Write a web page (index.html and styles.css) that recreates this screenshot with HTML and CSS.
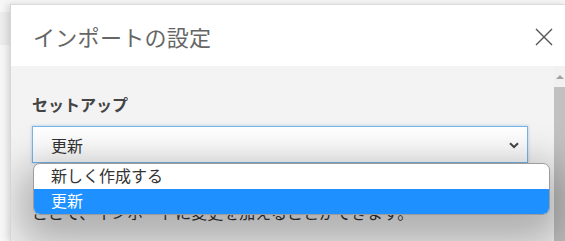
FILE: index.html
```html
<!DOCTYPE html>
<html lang="ja">
<head>
    <meta charset="UTF-8">
    <meta name="viewport" content="width=device-width, initial-scale=1.0">
    <title>インポートの設定</title>
    <link rel="stylesheet" href="styles.css">
</head>
<body>
    <div class="backdrop">
        <div class="band"></div>
    </div>
    <div class="dialog">
        <div class="header">
            <h1 class="title">インポートの設定</h1>
            <button class="close" aria-label="閉じる">
                <svg width="18" height="18" viewBox="0 0 18 18">
                    <path d="M1 1 L17 17 M17 1 L1 17" stroke="#555" stroke-width="1.4" fill="none"/>
                </svg>
            </button>
        </div>
        <div class="body">
            <div class="content">
                <label class="label">セットアップ</label>
                <div class="field">
                    <div class="select">
                        <span>更新</span>
                        <svg class="chevron" width="10" height="7" viewBox="0 0 10 7">
                            <path d="M1 1.2 L5 5 L9 1.2" stroke="#444" stroke-width="2" fill="none"/>
                        </svg>
                    </div>
                    <ul class="options">
                        <li class="option">新しく作成する</li>
                        <li class="option selected">更新</li>
                    </ul>
                </div>
                <p class="hint">ここで、インポートに変更を加えることができます。</p>
            </div>
            <div class="scrollbar">
                <div class="arrow"></div>
                <div class="thumb"></div>
            </div>
        </div>
    </div>
</body>
</html>
```

FILE: styles.css
```css
body {
    margin: 0;
    width: 565px;
    height: 241px;
    overflow: hidden;
    background-color: #f6f6f6;
    font-family: "Noto Sans CJK JP", "Noto Sans", sans-serif;
    position: relative;
}

.backdrop {
    position: absolute;
    inset: 0;
    padding-top: 12px;
}

.band {
    height: 33px;
    background-color: #ececec;
}

.dialog {
    position: relative;
    margin: 4px 0 0 10px;
    width: 555px;
    height: 236px;
    overflow: hidden;
    background-color: #f3f3f3;
    border-top: 1px solid #dcdcdc;
    border-left: 1px solid #d6d6d6;
    box-shadow: -3px 0 6px rgba(0, 0, 0, 0.12);
    display: flex;
    flex-direction: column;
}

.header {
    height: 61px;
    background-color: white;
    display: flex;
    align-items: center;
    justify-content: space-between;
    padding: 0 13px 0 22px;
    flex-shrink: 0;
}

.title {
    margin: 0;
    font-size: 22px;
    font-weight: normal;
    color: #666;
    letter-spacing: 0.3px;
}

.close {
    background: none;
    border: none;
    padding: 0;
    width: 18px;
    height: 18px;
    margin-top: 2px;
    cursor: pointer;
}

.body {
    flex: 1;
    display: flex;
}

.content {
    flex: 1;
    padding: 26px 0 0 21px;
}

.label {
    display: block;
    font-size: 16px;
    font-weight: bold;
    color: #444;
    line-height: 24px;
}

.field {
    position: relative;
    width: 496px;
    margin-top: 10px;
}

.select {
    height: 35px;
    background: linear-gradient(#fff, #fafafa);
    border: 1px solid #78b5e6;
    box-shadow: 0 0 3px rgba(90, 160, 230, 0.5);
    display: flex;
    align-items: center;
    justify-content: space-between;
    padding: 0 8px 0 18px;
    font-size: 16px;
    color: #333;
}

.chevron {
    margin-top: 1px;
}

.options {
    position: absolute;
    top: 37px;
    left: 1px;
    width: 515px;
    margin: 0;
    padding: 0;
    list-style: none;
    background-color: white;
    border: 1px solid #9c9c9c;
    border-radius: 7px;
    overflow: hidden;
    box-shadow: 0 16px 40px 14px rgba(0, 0, 0, 0.28);
    z-index: 2;
}

.option {
    height: 25px;
    line-height: 23px;
    padding-left: 17px;
    font-size: 16px;
    color: #333;
}

.option.selected {
    background-color: #1e90ff;
    color: white;
}

.hint {
    margin: 37px 0 0;
    font-size: 16px;
    color: #333;
    line-height: 24px;
}

.scrollbar {
    width: 12px;
    background-color: #f1f1f1;
    flex-shrink: 0;
    display: flex;
    flex-direction: column;
    align-items: flex-start;
}

.arrow {
    width: 0;
    height: 0;
    margin: 9px 0 0 2px;
    border-left: 4px solid transparent;
    border-right: 4px solid transparent;
    border-bottom: 4px solid #a3a3a3;
}

.thumb {
    width: 12px;
    flex: 1;
    margin-top: 8px;
    background-color: #c1c1c1;
}
```
